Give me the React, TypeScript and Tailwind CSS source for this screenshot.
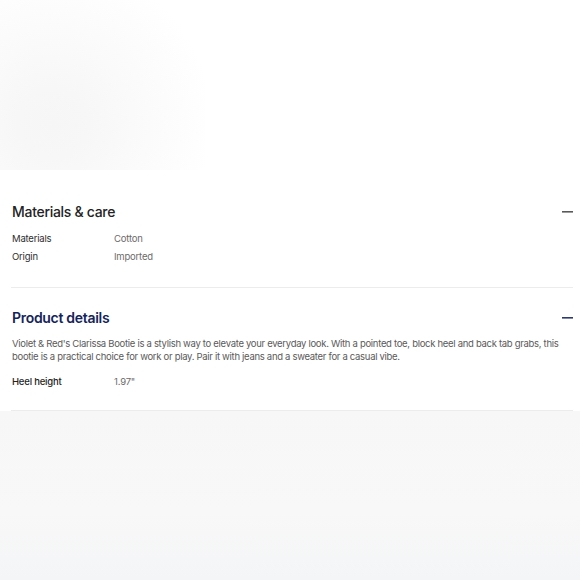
import React from "react";

function Minus({ color }: { color: string }) {
  return (
    <svg width="11" height="2" viewBox="0 0 11 2" className="block">
      <rect x="0" y="0" width="11" height="1.6" fill={color} />
    </svg>
  );
}

export default function App() {
  return (
    <div
      className="w-[580px] h-[580px] bg-white overflow-hidden flex flex-col"
      style={{ fontFamily: "Inter, 'Noto Sans', sans-serif" }}
    >
      <div className="h-[170px] w-[205px] shrink-0 bg-[radial-gradient(circle_at_53px_123px,#f6f6f6_0px,#f7f7f7_35px,#fafafa_80px,#fdfdfd_130px,#ffffff_160px)]" />
      <div className="pl-[11px] pr-[7px] shrink-0">
        <section className="pt-[32px] pb-[21px] border-b border-[#ececec]">
          <div className="flex items-center justify-between h-[20px]">
            <h2 className="text-[14px] leading-[20px] font-medium tracking-[-0.3px] text-[#232323] pl-[1px]">
              Materials &amp; care
            </h2>
            <Minus color="#5a5a5a" />
          </div>
          <div className="mt-[8px] text-[9.5px] leading-[18px] tracking-[-0.2px] pl-[1px]">
            <div className="flex">
              <span className="w-[102px] text-[#2e2e2e]">Materials</span>
              <span className="text-[#6b6b6b]">Cotton</span>
            </div>
            <div className="flex">
              <span className="w-[102px] text-[#2e2e2e]">Origin</span>
              <span className="text-[#6b6b6b]">Imported</span>
            </div>
          </div>
        </section>
        <section className="pt-[20px] pb-[19px] border-b border-[#ececec]">
          <div className="flex items-center justify-between h-[20px]">
            <h2 className="text-[14px] leading-[20px] font-semibold tracking-[-0.3px] text-[#14245a] pl-[1px]">
              Product details
            </h2>
            <Minus color="#2c3a6e" />
          </div>
          <p className="mt-[10px] text-[9.5px] leading-[12.5px] tracking-[-0.3px] text-[#5a5a5a] pl-[1px]">
            Violet &amp; Red's Clarissa Bootie is a stylish way to elevate your everyday look. With a pointed toe, block heel and back tab grabs, this bootie is a practical choice for work or play. Pair it with jeans and a sweater for a casual vibe.
          </p>
          <div className="mt-[10px] text-[9.5px] leading-[18px] tracking-[-0.2px] flex pl-[1px]">
            <span className="w-[102px] text-[#232323] font-medium">Heel height</span>
            <span className="text-[#6b6b6b]">1.97"</span>
          </div>
        </section>
      </div>
      <div className="flex-1 bg-[linear-gradient(180deg,#f7f7f8_0%,#f8f8f9_60%,#f4f5f6_100%)]" />
    </div>
  );
}
